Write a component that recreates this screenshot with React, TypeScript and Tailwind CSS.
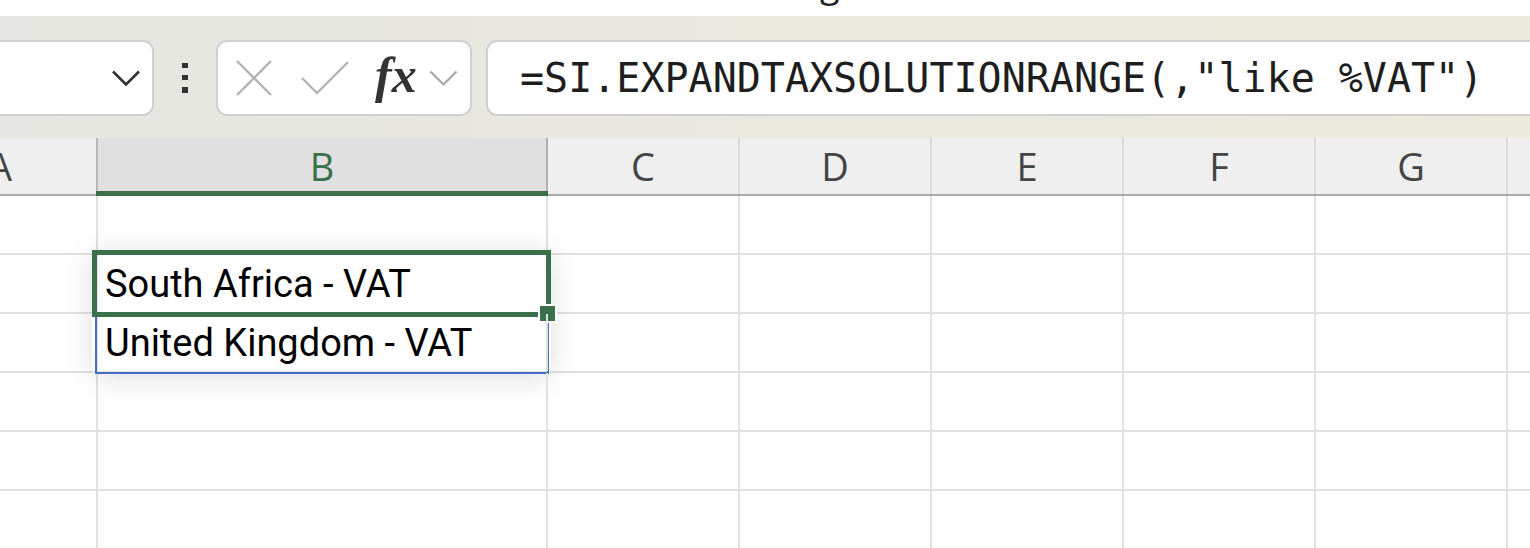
import React from 'react';

// Column headers after B (C..G), each 192px wide
const cols = ['C', 'D', 'E', 'F', 'G'];
const rows = [
  { b: '' },
  { b: 'South Africa - VAT', selected: true },
  { b: 'United Kingdom - VAT' },
  { b: '' },
  { b: '' },
  { b: '' },
];

const headFont = { fontFamily: '"Open Sans", "Noto Sans", sans-serif' };
const cellFont = { fontFamily: 'Roboto, "Noto Sans", sans-serif' };

function Chevron({ className, color, width }: { className: string; color: string; width: number }) {
  return (
    <svg viewBox="0 0 28 16" className={className} fill="none">
      <path d="M1 1.5 L14 14.5 L27 1.5" stroke={color} strokeWidth={width} />
    </svg>
  );
}

export default function App() {
  return (
    <div className="w-[1530px] h-[548px] overflow-hidden bg-white">
      {/* title strip, text cut off above */}
      <div className="h-[16px] overflow-hidden pl-[820px] bg-white">
        <div className="text-[36px] leading-[48px] -mt-[40px] text-[#222]" style={headFont}>g</div>
      </div>

      {/* formula bar */}
      <div className="h-[122px] flex items-start pt-[24px] bg-gradient-to-r from-[#e6e6e2] via-[#e9e9e0] to-[#eceadb]">
        {/* name box */}
        <div className="w-[170px] -ml-[16px] h-[76px] rounded-[11px] border-2 border-[#d0d0d0] bg-white flex items-center justify-end pr-[12px] shrink-0">
          <Chevron className="w-[28px] h-[16px]" color="#333" width={2.6} />
        </div>
        <div className="w-[62px] h-[76px] flex flex-col items-center justify-center gap-[7px] shrink-0">
          <div className="w-[6px] h-[5px] bg-[#333]" />
          <div className="w-[6px] h-[5px] bg-[#333]" />
          <div className="w-[6px] h-[6px] bg-[#333]" />
        </div>
        {/* cancel / enter / fx */}
        <div className="w-[256px] h-[76px] rounded-[11px] border-2 border-[#d0d0d0] bg-white flex items-center shrink-0">
          <svg viewBox="0 0 36 36" className="w-[36px] h-[36px] ml-[18px]" fill="none">
            <path d="M1 1 L35 35 M35 1 L1 35" stroke="#b4b4b4" strokeWidth="2.4" />
          </svg>
          <svg viewBox="0 0 48 34" className="w-[48px] h-[34px] ml-[29px]" fill="none">
            <path d="M1 17 L16 32 L47 1" stroke="#b4b4b4" strokeWidth="2.4" />
          </svg>
          <span className="ml-[26px] text-[50px] leading-none italic font-bold text-[#333] -mt-[6px]" style={{ fontFamily: '"Liberation Serif", serif' }}>fx</span>
          <Chevron className="w-[29px] h-[16px] ml-[12px]" color="#a8a8a8" width={2.2} />
        </div>
        {/* formula input */}
        <div className="flex-1 -mr-[20px] ml-[14px] h-[76px] rounded-[11px] border-2 border-[#d0d0d0] bg-white flex items-center pl-[32px]">
          <span className="text-[40px] text-[#1e1e1e] leading-none" style={{ fontFamily: '"DejaVu Sans Mono", monospace' }}>
            =SI.EXPANDTAXSOLUTIONRANGE(,"like %VAT")
          </span>
        </div>
      </div>

      {/* column headers */}
      <div className="h-[58px] flex bg-[#efefef] border-b-2 border-[#ababab] text-[38px] text-[#444]" style={headFont}>
        <div className="w-[98px] shrink-0 overflow-hidden border-r-2 border-[#b8b8b8]">
          <div className="w-[192px] -ml-[96px] h-full flex items-center justify-center">A</div>
        </div>
        <div className="w-[450px] shrink-0 relative bg-[#e0e0e0] border-r-2 border-[#b0b0b0] flex items-center justify-center text-[#3a714a]">
          B
          <div className="absolute -left-[2px] -right-[2px] -bottom-[2px] h-[5px] bg-[#3a714a]" />
        </div>
        {cols.map((c) => (
          <div key={c} className="w-[192px] shrink-0 border-r-2 border-[#dadada] flex items-center justify-center">
            {c}
          </div>
        ))}
        <div className="flex-1" />
      </div>

      {/* grid rows */}
      {rows.map((r, i) => (
        <div key={i} className="h-[59px] flex border-b-2 border-[#e1e1e1] text-[38px] text-black" style={cellFont}>
          <div className="w-[98px] shrink-0 border-r-2 border-[#e1e1e1]" />
          <div className="w-[450px] shrink-0 border-r-2 border-[#e1e1e1] relative flex items-center pl-[7px]">
            {r.selected && (
              <>
                {/* soft shadow around the spilled range */}
                <div className="absolute -left-[6px] -top-[5px] w-[459px] h-[123px] shadow-[0_4px_26px_rgba(0,0,0,0.14)]" />
                {/* spill range outline */}
                <div className="absolute -left-[3px] top-[60px] w-[454px] h-[59px] border-2 border-[#4470c4]" />
                {/* active cell */}
                <div className="absolute -left-[6px] -top-[5px] w-[459px] h-[67px] border-[5px] border-[#3a714a]" />
                <div className="absolute left-[440px] top-[49px] w-[19px] h-[19px] bg-[#3a714a] border-2 border-white" />
              </>
            )}
            <span className="relative leading-none">{r.b}</span>
          </div>
          {cols.map((c) => (
            <div key={c} className="w-[192px] shrink-0 border-r-2 border-[#e1e1e1]" />
          ))}
          <div className="flex-1" />
        </div>
      ))}
    </div>
  );
}
